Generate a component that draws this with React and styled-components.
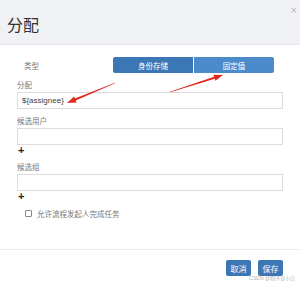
import React from "react";
import styled, { createGlobalStyle } from "styled-components";

const GlobalStyle = createGlobalStyle`
  body {
    margin: 0;
    background: #fff;
    font-family: "Liberation Sans", "Noto Sans CJK SC", sans-serif;
  }
`;

const arrows = [
  { from: [115, 83], to: [67, 103] },
  { from: [170, 92], to: [223, 75] },
];

// tapered shaft + filled head, like a screenshot annotation tool
const arrowPoints = ({ from, to }) => {
  const [x1, y1] = from;
  const [x2, y2] = to;
  const dx = x2 - x1;
  const dy = y2 - y1;
  const len = Math.hypot(dx, dy);
  const ux = dx / len;
  const uy = dy / len;
  const nx = -uy;
  const ny = ux;
  const headLen = 9;
  const bx = x2 - ux * headLen;
  const by = y2 - uy * headLen;
  const p = (x, y) => `${x.toFixed(1)},${y.toFixed(1)}`;
  return [
    p(x1 + nx * 0.3, y1 + ny * 0.3),
    p(bx + nx * 1.1, by + ny * 1.1),
    p(bx + nx * 3.2, by + ny * 3.2),
    p(x2, y2),
    p(bx - nx * 3.2, by - ny * 3.2),
    p(bx - nx * 1.1, by - ny * 1.1),
    p(x1 - nx * 0.3, y1 - ny * 0.3),
  ].join(" ");
};

const App = () => {
  return (
    <>
      <GlobalStyle />
      <Dialog>
        <Header>
          <Title>分配</Title>
          <Close>×</Close>
        </Header>
        <Body>
          <TypeRow>
            <TypeLabel>类型</TypeLabel>
            <Segmented>
              <SegButton>身份存储</SegButton>
              <SegButton $active>固定值</SegButton>
            </Segmented>
          </TypeRow>
          <FieldLabel>分配</FieldLabel>
          <Input defaultValue="${assignee}" />
          <FieldLabel>候选用户</FieldLabel>
          <Input />
          <Plus>+</Plus>
          <FieldLabel>候选组</FieldLabel>
          <Input />
          <Plus>+</Plus>
          <CheckRow>
            <Box />
            <span>允许流程发起人完成任务</span>
          </CheckRow>
        </Body>
        <Footer>
          <Button>取消</Button>
          <Button>保存</Button>
        </Footer>
        <Watermark>CSDN @程序员小白</Watermark>
        <Overlay width="300" height="283" viewBox="0 0 300 283">
          {arrows.map((a, i) => (
            <polygon key={i} points={arrowPoints(a)} fill="#e2281c" />
          ))}
        </Overlay>
      </Dialog>
    </>
  );
};

const Dialog = styled.div`
  position: relative;
  width: 300px;
  height: 283px;
  display: flex;
  flex-direction: column;
  background: #fff;
  overflow: hidden;
`;

const Header = styled.div`
  height: 44px;
  flex-shrink: 0;
  display: flex;
  align-items: center;
  justify-content: space-between;
  padding: 0 3px 0 7px;
  background: #eff1f4;
  border-bottom: 1px solid #e1e4e9;
`;

const Title = styled.h1`
  margin: 3px 0 0;
  font-size: 16px;
  font-weight: 400;
  color: #333;
`;

const Close = styled.span`
  align-self: flex-start;
  margin-top: 4px;
  font-size: 11px;
  color: #b9bcc2;
`;

const Body = styled.div`
  flex: 1;
  padding: 12px 17px 0;
`;

const TypeRow = styled.div`
  display: grid;
  grid-template-columns: 96px 161px;
  align-items: center;
  height: 16px;
`;

const TypeLabel = styled.span`
  padding-left: 7px;
  font-size: 7.5px;
  color: #777;
`;

const Segmented = styled.div`
  display: flex;
  gap: 1px;
  height: 16px;
  border-radius: 2px;
  overflow: hidden;
`;

const SegButton = styled.div`
  flex: 1;
  display: flex;
  align-items: center;
  justify-content: center;
  font-size: 7.5px;
  color: #fff;
  background: ${(p) => (p.$active ? "#4b8acb" : "#3b77b5")};
`;

const FieldLabel = styled.div`
  margin-top: 7px;
  font-size: 7.5px;
  line-height: 12px;
  color: #777;
  &:first-of-type {
    margin-top: 9px;
  }
`;

const Input = styled.input`
  display: block;
  box-sizing: border-box;
  width: 100%;
  height: 17px;
  margin: 0;
  padding: 0 4px;
  border: 1px solid #dcdcdc;
  border-radius: 0;
  outline: none;
  font-family: "Liberation Sans", "Noto Sans CJK SC", sans-serif;
  font-size: 8px;
  color: #444;
`;

const Plus = styled.div`
  height: 10px;
  padding-left: 1px;
  font-size: 11px;
  font-weight: 700;
  line-height: 10px;
  color: #222;
`;

const CheckRow = styled.div`
  display: flex;
  align-items: center;
  gap: 5px;
  margin-top: 6px;
  padding-left: 8px;
  height: 12px;
  font-size: 7.5px;
  color: #777;
`;

const Box = styled.span`
  width: 5px;
  height: 5px;
  border: 1px solid #888;
  border-radius: 1px;
`;

const Footer = styled.div`
  flex-shrink: 0;
  height: 34px;
  box-sizing: border-box;
  display: flex;
  justify-content: flex-end;
  align-items: flex-start;
  gap: 7px;
  padding: 10px 17px 0;
  border-top: 1px solid #eceef1;
`;

const Button = styled.div`
  width: 25px;
  height: 16px;
  display: flex;
  align-items: center;
  justify-content: center;
  border-radius: 2px;
  background: #3b77b5;
  font-size: 8px;
  color: #fff;
`;

const Watermark = styled.span`
  position: absolute;
  right: 5px;
  bottom: 2px;
  font-size: 5px;
  color: #b0b4ba;
`;

const Overlay = styled.svg`
  position: absolute;
  left: 0;
  top: 0;
  pointer-events: none;
`;

export default App;
